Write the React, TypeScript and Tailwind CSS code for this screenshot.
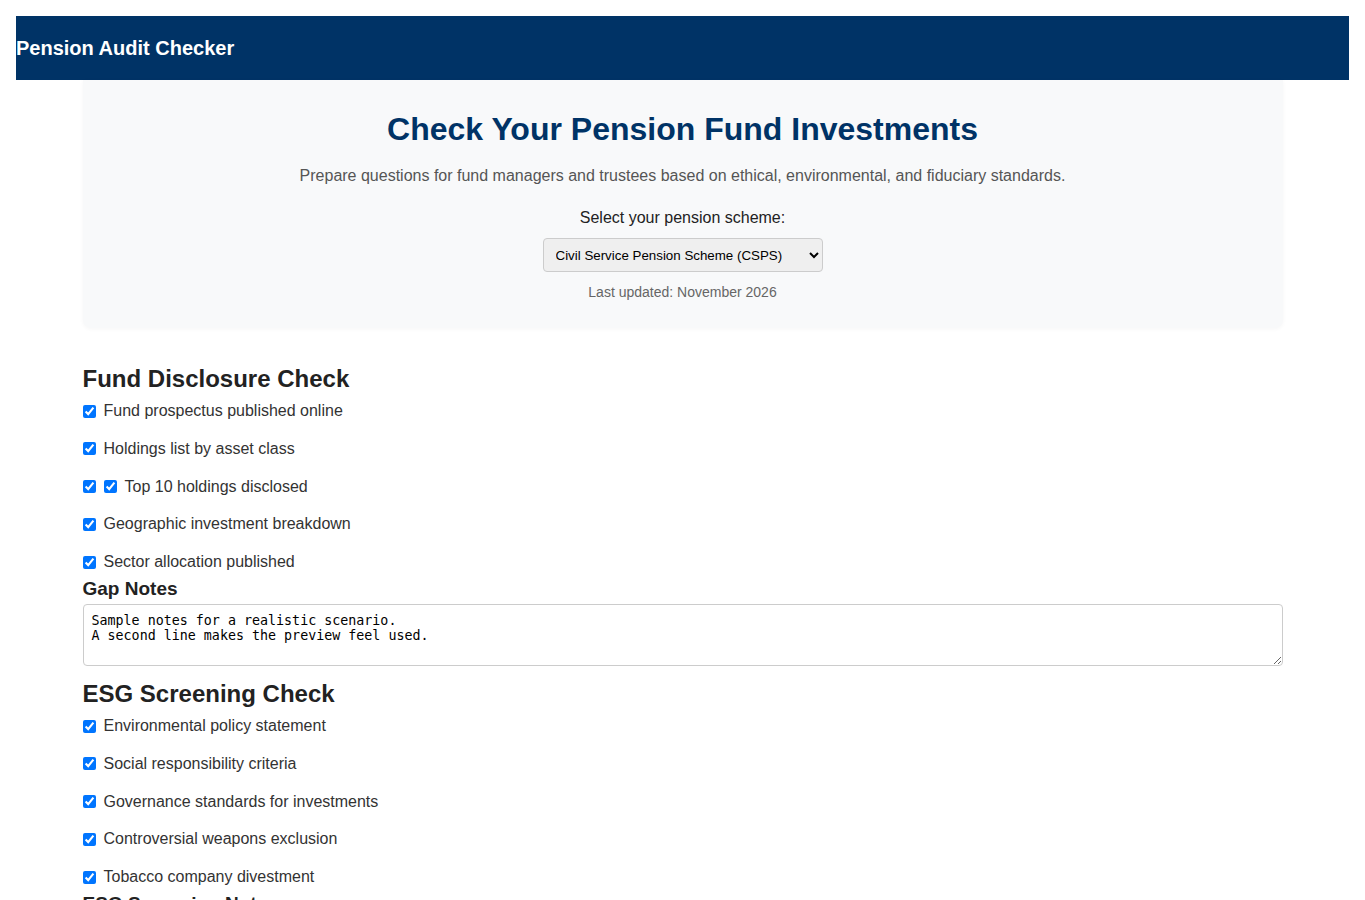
import React, { useState } from "react";

const disclosureItems = [
  { label: "Fund prospectus published online" },
  { label: "Holdings list by asset class" },
  { label: "Top 10 holdings disclosed", double: true },
  { label: "Geographic investment breakdown" },
  { label: "Sector allocation published" },
];

const esgItems = [
  { label: "Environmental policy statement" },
  { label: "Social responsibility criteria" },
  { label: "Governance standards for investments" },
  { label: "Controversial weapons exclusion" },
  { label: "Tobacco company divestment" },
];

function CheckRow({ label, double, last }: { label: string; double?: boolean; last?: boolean }) {
  return (
    <label className={`flex items-center text-[16px] leading-[18px] text-[#333] ${last ? "" : "pb-[19.75px]"}`}>
      <input type="checkbox" defaultChecked className="m-0 mr-[8px] h-[13px] w-[13px] accent-[#0075ff]" />
      {double && (
        <input type="checkbox" defaultChecked className="m-0 mr-[8px] h-[13px] w-[13px] accent-[#0075ff]" />
      )}
      <span>{label}</span>
    </label>
  );
}

function Section({
  title,
  items,
  notesTitle,
  notes,
}: {
  title: string;
  items: { label: string; double?: boolean }[];
  notesTitle: string;
  notes?: string;
}) {
  return (
    <section className="flex flex-col">
      <h2 className="text-[24px] font-bold leading-[28px] text-[#222]">{title}</h2>
      <div className="mt-[9px] flex flex-col">
        {items.map((it, i) => (
          <CheckRow key={it.label} label={it.label} double={it.double} last={i === items.length - 1} />
        ))}
      </div>
      <h3 className="mt-[7px] text-[19px] font-bold leading-[22px] text-[#222]">{notesTitle}</h3>
      {notes !== undefined && (
        <textarea
          defaultValue={notes}
          className="mt-[4px] h-[62px] w-full resize-y rounded-[4px] border border-[#ccc] bg-white px-[8px] pb-[7px] pt-[8px] text-[13.333px] leading-[15px] text-black"
          style={{ fontFamily: '"DejaVu Sans Mono", "Liberation Mono", monospace' }}
        />
      )}
    </section>
  );
}

export default function App() {
  const [scheme, setScheme] = useState("csps");
  return (
    <div
      className="min-h-screen bg-white p-[16px] text-[#333]"
      style={{ fontFamily: '"Liberation Sans", Arial, sans-serif' }}
    >
      <header className="flex h-[64px] items-center bg-[#003366]">
        <span className="text-[20px] font-bold text-white">Pension Audit Checker</span>
      </header>

      <main className="mx-auto flex w-full max-w-[1200px] flex-col">
        <div className="flex flex-col items-center rounded-b-[8px] bg-[#f8f9fa] pb-[28px] pt-[31px] shadow-[0_1px_4px_rgba(0,0,0,0.04)]">
          <h1 className="text-[32px] font-bold leading-[36px] text-[#003366]">
            Check Your Pension Fund Investments
          </h1>
          <p className="mt-[20px] text-[16px] leading-[18px] text-[#555]">
            Prepare questions for fund managers and trustees based on ethical, environmental, and fiduciary standards.
          </p>
          <label htmlFor="scheme" className="mt-[24px] text-[16px] leading-[18px] text-[#222]">
            Select your pension scheme:
          </label>
          <select
            id="scheme"
            value={scheme}
            onChange={(e) => setScheme(e.target.value)}
            className="mt-[11px] h-[34px] w-[280px] rounded-[4px] border border-[#ccc] bg-[#efefef] px-[8px] text-[13.333px] text-black"
          >
            <option value="csps">Civil Service Pension Scheme (CSPS)</option>
            <option value="lgps">Local Government Pension Scheme (LGPS)</option>
            <option value="nhs">NHS Pension Scheme</option>
            <option value="tps">Teachers' Pension Scheme</option>
          </select>
          <p className="mt-[12px] text-[14px] leading-[16px] text-[#666]">Last updated: November 2026</p>
        </div>

        <div className="mt-[37px]">
          <Section
            title="Fund Disclosure Check"
            items={disclosureItems}
            notesTitle="Gap Notes"
            notes={"Sample notes for a realistic scenario.\nA second line makes the preview feel used."}
          />
        </div>
        <div className="mt-[14px]">
          <Section title="ESG Screening Check" items={esgItems} notesTitle="ESG Screening Notes" notes="" />
        </div>
      </main>
    </div>
  );
}
